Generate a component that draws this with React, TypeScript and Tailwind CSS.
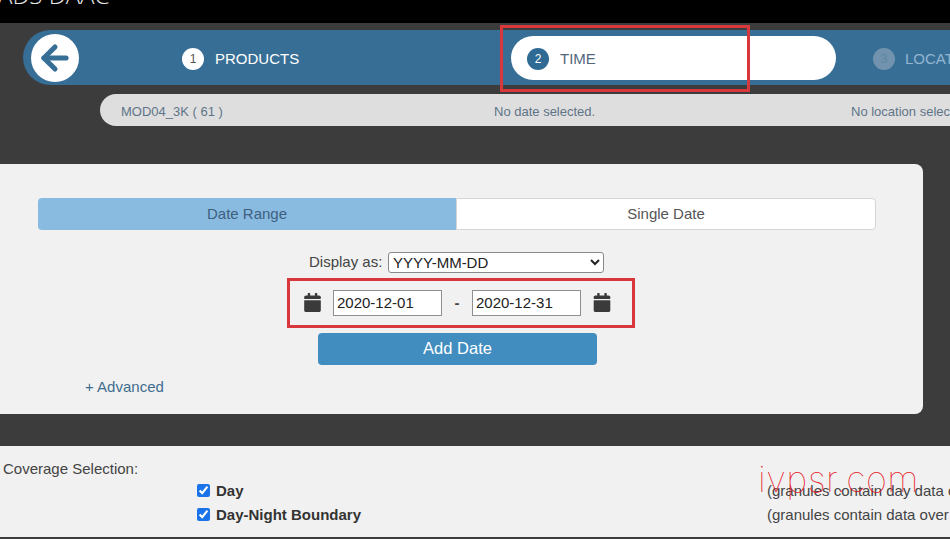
import { ArrowLeft } from 'lucide-react';
import { FaCalendar } from 'react-icons/fa';

const sans = 'font-["Liberation_Sans",Arial,sans-serif]';

const App = () => {
  return (
    <div className={`relative h-[539px] w-[950px] overflow-hidden bg-[#3c3c3c] ${sans}`}>
      <header className="h-[23px] overflow-hidden bg-black">
        <p className='-mt-[23px] -ml-[2px] whitespace-nowrap font-["Open_Sans",sans-serif] text-[24px] font-light leading-[36px] text-[#e8e8e8]'>
          ADS DAAC
        </p>
      </header>

      {/* step navigation */}
      <nav
        className="mt-[7px] ml-[23px] flex h-[55px] w-[1000px] items-center rounded-l-[28px] bg-[#376e96]"
        aria-label="Steps"
      >
        <button
          type="button"
          className="ml-[8px] flex h-[48px] w-[48px] items-center justify-center rounded-full bg-white text-[#376e96]"
        >
          <ArrowLeft size={38} strokeWidth={3.2} />
        </button>

        <div className="mt-[3px] ml-[103px] flex w-[329px] items-center">
          <span className="flex h-[22px] w-[22px] items-center justify-center rounded-full bg-white text-[12px] text-[#555]">
            1
          </span>
          <span className="ml-[11px] text-[15px] text-white">PRODUCTS</span>
        </div>

        <div className="mt-[1px] flex h-[44px] w-[325px] items-center rounded-full bg-white pt-[2px] pl-[16px]">
          <span className="flex h-[22px] w-[22px] items-center justify-center rounded-full bg-[#2f6a94] text-[12px] text-white">
            2
          </span>
          <span className="ml-[11px] text-[15px] text-[#53677c]">TIME</span>
        </div>

        <div className="mt-[3px] ml-[37px] flex items-center">
          <span className="flex h-[22px] w-[22px] items-center justify-center rounded-full bg-[#7193ad] text-[12px] text-[#5f86a3]">
            3
          </span>
          <span className="ml-[10px] whitespace-nowrap text-[15px] text-[#93b5d0]">LOCATION</span>
        </div>
      </nav>

      {/* current selection */}
      <div className="mt-[9px] ml-[100px] flex h-[32px] w-[1000px] items-center rounded-l-[16px] bg-[#dedede] pt-[3px] pl-[21px] text-[13px] text-[#5f7489]">
        <span className="w-[373px]">MOD04_3K ( 61 )</span>
        <span className="w-[357px]">No date selected.</span>
        <span className="whitespace-nowrap">No location selected.</span>
      </div>

      {/* date panel */}
      <section className="mt-[38px] h-[250px] w-[923px] rounded-r-lg bg-[#f1f1f1] pt-[34px]">
        <div className="ml-[38px] flex h-[32px] w-[838px] text-[15px]">
          <div className="flex flex-1 items-center justify-center rounded-l bg-[#88bbdf] text-[#3f5f7f]">
            Date Range
          </div>
          <div className="flex flex-1 items-center justify-center rounded-r border border-[#d5d5d5] bg-white text-[#555]">
            Single Date
          </div>
        </div>

        <div className="mt-[21px] ml-[309px] flex items-center text-[15px] text-[#444]">
          <span className="w-[79px]">Display as:</span>
          <select
            defaultValue="YYYY-MM-DD"
            className="h-[21px] w-[216px] rounded-[3px] border border-[#8a8a8a] bg-white text-[15px] text-[#222]"
          >
            <option>YYYY-MM-DD</option>
            <option>YYYY-DDD</option>
          </select>
        </div>

        <div className="mt-[16px] ml-[304px] flex h-[26px] items-center">
          <FaCalendar className="h-[19px] w-[17px] text-[#3a3a3a]" />
          <input
            readOnly
            value="2020-12-01"
            className="ml-[12px] h-[26px] w-[109px] border border-[#8f8f8f] bg-white px-[3px] text-[15px] text-[#222]"
          />
          <span className="w-[30px] pt-[2px] text-center text-[15px] font-bold text-[#444]">-</span>
          <input
            readOnly
            value="2020-12-31"
            className="h-[26px] w-[109px] border border-[#8f8f8f] bg-white px-[3px] text-[15px] text-[#222]"
          />
          <FaCalendar className="ml-[12px] h-[19px] w-[18px] text-[#3a3a3a]" />
        </div>

        <button
          type="button"
          className="mt-[17px] ml-[318px] block h-[32px] w-[279px] rounded bg-[#418dc0] text-[16.5px] text-white"
        >
          Add Date
        </button>

        <a href="#" className="mt-[11px] ml-[85px] block text-[15px] text-[#3f6d8f]">
          + Advanced
        </a>
      </section>

      {/* coverage */}
      <section className="mt-[32px] h-[91px] bg-[#f1f1f1] pt-[15px] text-[15px] text-[#444]">
        <p className="ml-[3px] leading-[16px]">Coverage Selection:</p>
        <div className="mt-[1px] ml-[197px] flex h-[24px] items-center">
          <input type="checkbox" readOnly checked className="h-[13px] w-[13px] shrink-0 accent-[#1a73e8]" />
          <span className="w-[557px] shrink-0 pt-[3px] pl-[6px] font-bold text-[#333]">Day</span>
          <span className="whitespace-nowrap pt-[2px]">(granules contain day data only)</span>
        </div>
        <div className="ml-[197px] flex h-[24px] items-center">
          <input type="checkbox" readOnly checked className="h-[13px] w-[13px] shrink-0 accent-[#1a73e8]" />
          <span className="w-[557px] shrink-0 pt-[3px] pl-[6px] font-bold text-[#333]">Day-Night Boundary</span>
          <span className="whitespace-nowrap pt-[2px]">(granules contain data over the boundary)</span>
        </div>
      </section>

      {/* annotations over the screenshot */}
      <div className="absolute top-[25px] left-[500px] h-[67px] w-[250px] border-[3px] border-[#d8383c]" />
      <div className="absolute top-[278px] left-[287px] h-[50px] w-[348px] border-[3px] border-[#d8383c]" />
      <span className='absolute top-[454px] left-[758px] font-["Inter",sans-serif] text-[36px] leading-[50px] font-thin tracking-[0.5px] whitespace-nowrap text-[#e4141c]'>
        ivpsr.com
      </span>
    </div>
  );
};

export default App;
